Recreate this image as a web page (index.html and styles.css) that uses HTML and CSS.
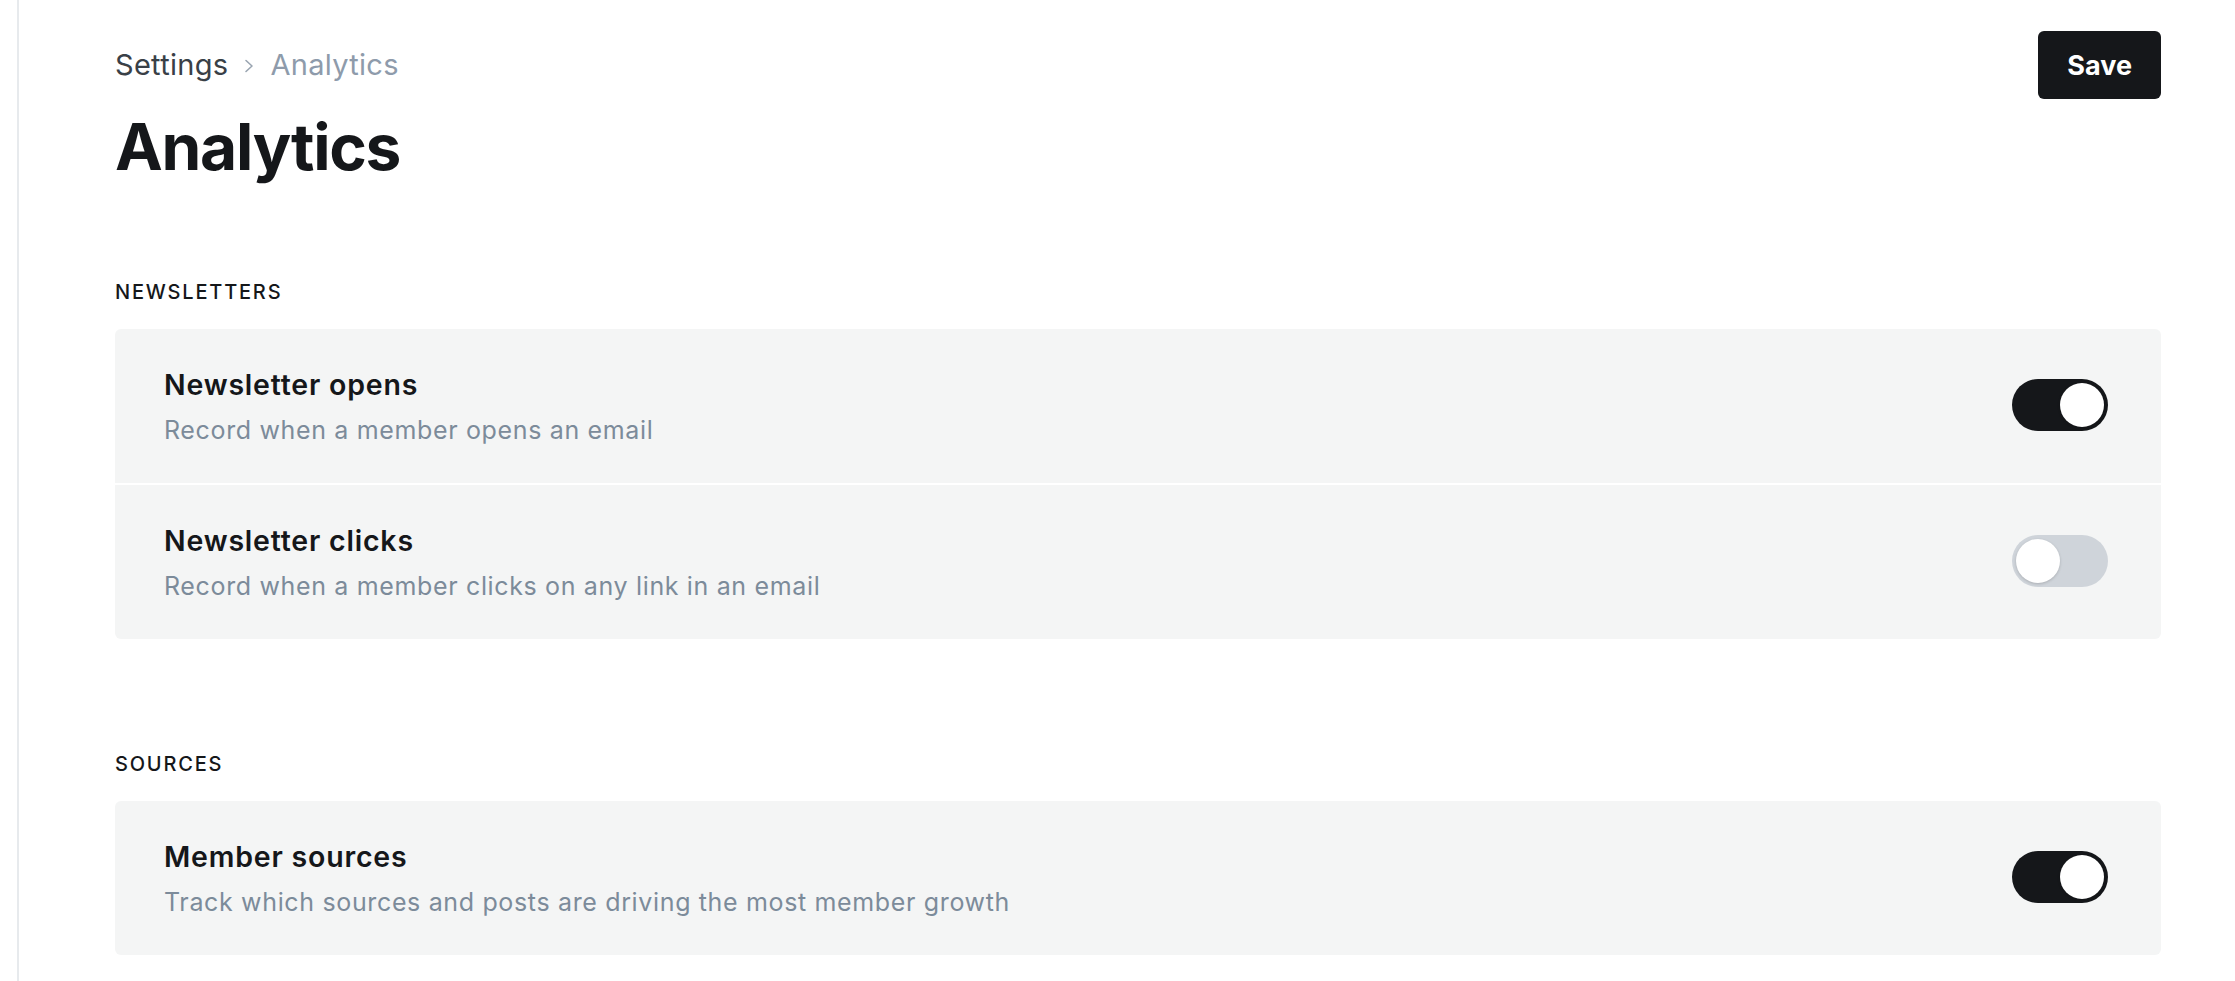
FILE: index.html
```html
<!DOCTYPE html>
<html lang="en">
<head>
<meta charset="utf-8">
<title>Analytics - Settings</title>
<link rel="stylesheet" href="styles.css">
</head>
<body>
<div class="app">
  <aside class="sidebar"></aside>
  <main class="main">
    <header class="topbar">
      <nav class="breadcrumb">
        <span class="crumb-parent">Settings</span>
        <svg class="crumb-sep" width="10" height="14" viewBox="0 0 10 14" aria-hidden="true"><polyline points="2,1.5 8,7 2,12.5" fill="none" stroke="#9aa5b1" stroke-width="1.6" stroke-linecap="round" stroke-linejoin="round"/></svg>
        <span class="crumb-current">Analytics</span>
      </nav>
      <button class="btn-save">Save</button>
    </header>
    <h1 class="page-title">Analytics</h1>

    <section class="group group-first">
      <h2 class="group-label">NEWSLETTERS</h2>
      <div class="card">
        <div class="row">
          <div class="row-text">
            <div class="row-title">Newsletter opens</div>
            <div class="row-desc">Record when a member opens an email</div>
          </div>
          <span class="toggle on"><span class="knob"></span></span>
        </div>
        <div class="row">
          <div class="row-text">
            <div class="row-title">Newsletter clicks</div>
            <div class="row-desc">Record when a member clicks on any link in an email</div>
          </div>
          <span class="toggle"><span class="knob"></span></span>
        </div>
      </div>
    </section>

    <section class="group group-second">
      <h2 class="group-label">SOURCES</h2>
      <div class="card">
        <div class="row">
          <div class="row-text">
            <div class="row-title">Member sources</div>
            <div class="row-desc">Track which sources and posts are driving the most member growth</div>
          </div>
          <span class="toggle on"><span class="knob"></span></span>
        </div>
      </div>
    </section>
  </main>
</div>
</body>
</html>
```

FILE: styles.css
```css
* { box-sizing: border-box; }

html, body {
  margin: 0;
  padding: 0;
  background: #ffffff;
  font-family: Inter, "Noto Sans", "Liberation Sans", sans-serif;
  color: #15171a;
}

.app {
  display: flex;
  min-height: 100vh;
}

.sidebar {
  width: 19px;
  flex: none;
  border-right: 2px solid #e7eaed;
}

.main {
  flex: 1;
  padding: 31px 74px 0 96px;
}

.topbar {
  display: flex;
  align-items: center;
  justify-content: space-between;
  height: 68px;
}

.breadcrumb {
  display: flex;
  align-items: center;
  gap: 16px;
  font-size: 29px;
  line-height: 36px;
  letter-spacing: 0.3px;
}

.crumb-parent { color: #394047; }
.crumb-current { color: #8e9bab; }
.crumb-sep { display: block; margin-top: 2px; }

.btn-save {
  height: 68px;
  padding: 0 29px;
  border: 0;
  border-radius: 6px;
  background: #15171a;
  color: #ffffff;
  font-family: inherit;
  font-size: 27px;
  font-weight: 700;
  letter-spacing: 0;
}

.page-title {
  margin: 13px 0 0;
  font-size: 64px;
  line-height: 70px;
  font-weight: 700;
  letter-spacing: -0.02em;
  color: #15171a;
}

.group-first { margin-top: 96px; }
.group-second { margin-top: 111px; }

.group-label {
  margin: 0 0 23px;
  font-size: 20px;
  line-height: 28px;
  font-weight: 500;
  letter-spacing: 0.09em;
  color: #15171a;
}

.card {
  background: #f4f5f5;
  border-radius: 6px;
  overflow: hidden;
}

.row {
  display: flex;
  align-items: center;
  justify-content: space-between;
  padding: 39px 53px 35px 49px;
}

.row + .row { border-top: 2px solid #ffffff; }

.row-text {
  display: flex;
  flex-direction: column;
  gap: 10px;
}

.row-title {
  font-size: 28.5px;
  line-height: 34px;
  font-weight: 600;
  letter-spacing: 0.8px;
  color: #15171a;
}

.row-desc {
  font-size: 25px;
  line-height: 36px;
  letter-spacing: 0.65px;
  color: #7c8b9a;
}

.toggle {
  position: relative;
  flex: none;
  width: 96px;
  height: 52px;
  border-radius: 26px;
  background: #cfd4da;
  margin-top: -7px;
}

.toggle.on { background: #15171a; }

.knob {
  position: absolute;
  top: 4px;
  left: 4px;
  width: 44px;
  height: 44px;
  border-radius: 50%;
  background: #ffffff;
  box-shadow: 0 1px 3px rgba(0, 0, 0, 0.18);
}

.toggle.on .knob { left: 48px; }
```
